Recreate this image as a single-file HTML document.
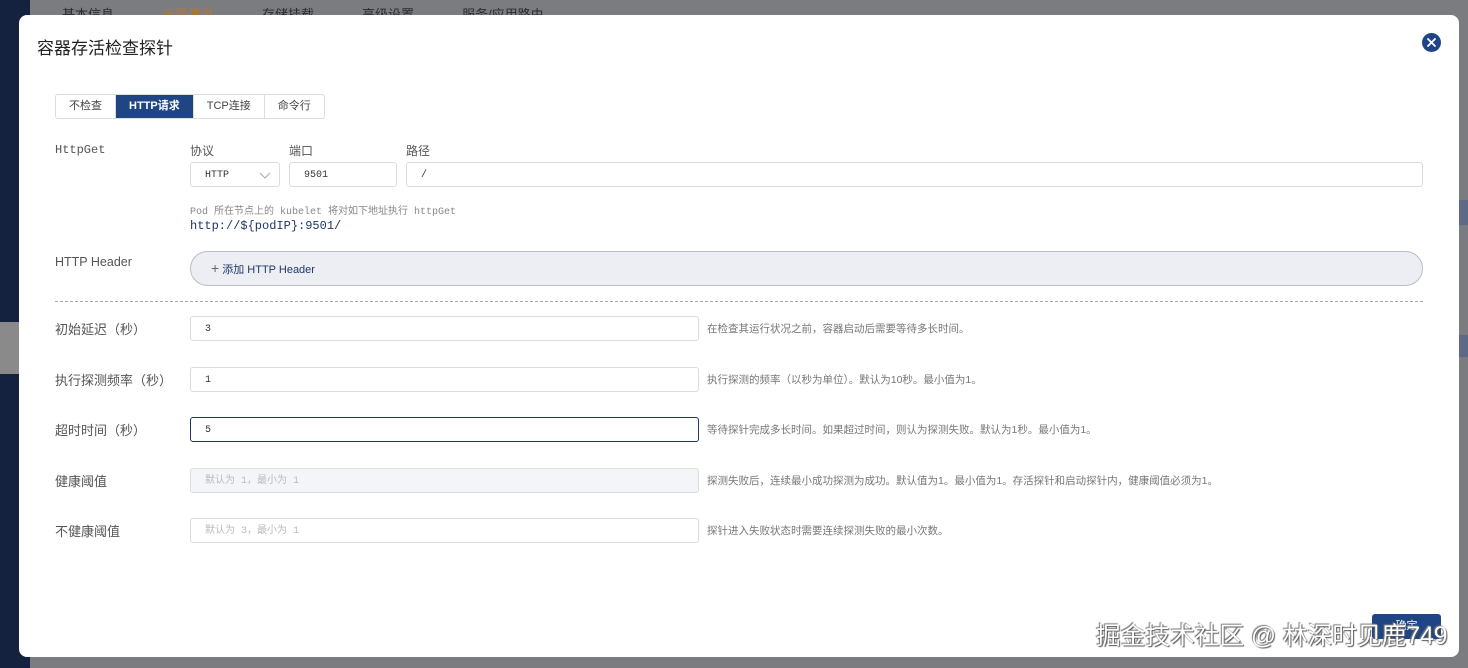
<!DOCTYPE html>
<html><head><meta charset="utf-8">
<style>
*{box-sizing:border-box;margin:0;padding:0}
body{width:1468px;height:668px;overflow:hidden;background:#7b7c80;font-family:"Liberation Sans","Noto Sans CJK SC",sans-serif;position:relative;color:#333}
.side{position:absolute;left:0;top:0;width:30px;height:668px;background:#14223f}
.gap{position:absolute;left:0;top:322px;width:30px;height:52px;background:#8a8a8a}
.toptabs{position:absolute;top:4px;left:62px;font-size:13px;color:#2a2a2a;white-space:nowrap}
.toptabs span{margin-right:48px}
.toptabs .act{color:#b07a30}
.modal{position:absolute;left:19px;top:15px;width:1440px;height:642px;background:#fff;border-radius:8px}
.title{position:absolute;left:18px;top:19px;font-size:17px;color:#222}
.close{position:absolute;left:1403px;top:18px;width:19px;height:19px;border-radius:50%;background:#1f4584}
.abs{position:absolute}
.seg{position:absolute;left:36px;top:79px;height:25px;display:flex;border:1px solid #ddd;border-radius:3px;font-size:11px}
.seg div{padding:0 13px;line-height:23px;color:#444;border-right:1px solid #ddd}
.seg div:last-child{border-right:none}
.seg .on{background:#1f4584;color:#fff;font-weight:bold}
.lbl{position:absolute;font-size:13px;color:#555}
.inp{position:absolute;height:25px;border:1px solid #dcdcdc;border-radius:3px;font-size:10px;color:#333;padding-left:14px;line-height:25px;font-family:"Liberation Mono","Noto Sans CJK SC",monospace}
.hint{position:absolute;left:688px;font-size:10.5px;color:#777}
.mono{font-family:"Liberation Mono","Noto Sans CJK SC",monospace}
</style></head><body>
<div class="side"></div><div class="gap"></div>
<div class="toptabs"><span>基本信息</span><span class="act">容器信息</span><span>存储挂载</span><span>高级设置</span><span>服务/应用路由</span></div>
<div class="abs" style="left:1459px;top:200px;width:9px;height:25px;background:#5c6a86"></div>
<div class="abs" style="left:1459px;top:335px;width:9px;height:22px;background:#5c6a86"></div>
<div class="modal">
 <div class="title">容器存活检查探针</div>
 <div class="close"><svg width="19" height="19" viewBox="0 0 19 19"><path d="M6 6L13 13M13 6L6 13" stroke="#fff" stroke-width="1.8" stroke-linecap="round"/></svg></div>
 <div class="seg"><div>不检查</div><div class="on">HTTP请求</div><div>TCP连接</div><div>命令行</div></div>
 <div class="lbl mono" style="left:36px;top:128px;font-size:12px">HttpGet</div>
 <div class="lbl" style="left:171px;top:127px;font-size:12px">协议</div>
 <div class="lbl" style="left:270px;top:127px;font-size:12px">端口</div>
 <div class="lbl" style="left:387px;top:127px;font-size:12px">路径</div>
 <div class="inp" style="left:171px;top:147px;width:90px">HTTP<svg style="position:absolute;right:8px;top:9px" width="12" height="7" viewBox="0 0 12 7"><path d="M1 1L6 6L11 1" stroke="#aaa" fill="none"/></svg></div>
 <div class="inp" style="left:270px;top:147px;width:108px">9501</div>
 <div class="inp" style="left:387px;top:147px;width:1017px">/</div>
 <div class="abs mono" style="left:171px;top:187px;font-size:10px;color:#888">Pod 所在节点上的 kubelet 将对如下地址执行 httpGet</div>
 <div class="abs mono" style="left:171px;top:204px;font-size:12px;color:#1e3764">http://${podIP}:9501/</div>
 <div class="lbl" style="left:36px;top:240px;font-size:12.5px">HTTP Header</div>
 <div class="abs" style="left:171px;top:236px;width:1233px;height:35px;border:1px solid #b8bccb;border-radius:18px;background:#eceef4;font-size:11px;color:#1e3764;padding-left:20px;line-height:33px"><span style="color:#666;font-size:14px">+</span> 添加 HTTP Header</div>
 <div class="abs" style="left:36px;top:286px;width:1368px;border-top:1px dashed #aaa"></div>

 <div class="lbl" style="left:36px;top:304px">初始延迟（秒）</div>
 <div class="inp" style="left:171px;top:301px;width:509px">3</div>
 <div class="hint" style="top:306px">在检查其运行状况之前，容器启动后需要等待多长时间。</div>

 <div class="lbl" style="left:36px;top:355px">执行探测频率（秒）</div>
 <div class="inp" style="left:171px;top:352px;width:509px">1</div>
 <div class="hint" style="top:357px">执行探测的频率（以秒为单位）。默认为10秒。最小值为1。</div>

 <div class="lbl" style="left:36px;top:405px">超时时间（秒）</div>
 <div class="inp" style="left:171px;top:402px;width:509px;border-color:#1e3764">5</div>
 <div class="hint" style="top:407px">等待探针完成多长时间。如果超过时间，则认为探测失败。默认为1秒。最小值为1。</div>

 <div class="lbl" style="left:36px;top:456px">健康阈值</div>
 <div class="inp" style="left:171px;top:453px;width:509px;background:#f3f5f8;color:#bbb">默认为 1，最小为 1</div>
 <div class="hint" style="top:458px">探测失败后，连续最小成功探测为成功。默认值为1。最小值为1。存活探针和启动探针内，健康阈值必须为1。</div>

 <div class="lbl" style="left:36px;top:506px">不健康阈值</div>
 <div class="inp" style="left:171px;top:503px;width:509px;color:#bbb">默认为 3，最小为 1</div>
 <div class="hint" style="top:508px">探针进入失败状态时需要连续探测失败的最小次数。</div>

 <div class="abs" style="left:1353px;top:599px;width:69px;height:25px;background:#1f4584;border-radius:3px;color:#fff;font-size:11px;text-align:center;line-height:25px">确定</div>
</div>
<div class="abs" style="left:1096px;top:616px;font-size:24.7px;color:#fff;text-shadow:1px 1px 1px #555,-1px -1px 1px #777;white-space:nowrap">掘金技术社区 @ 林深时见鹿749</div>
</body></html>
